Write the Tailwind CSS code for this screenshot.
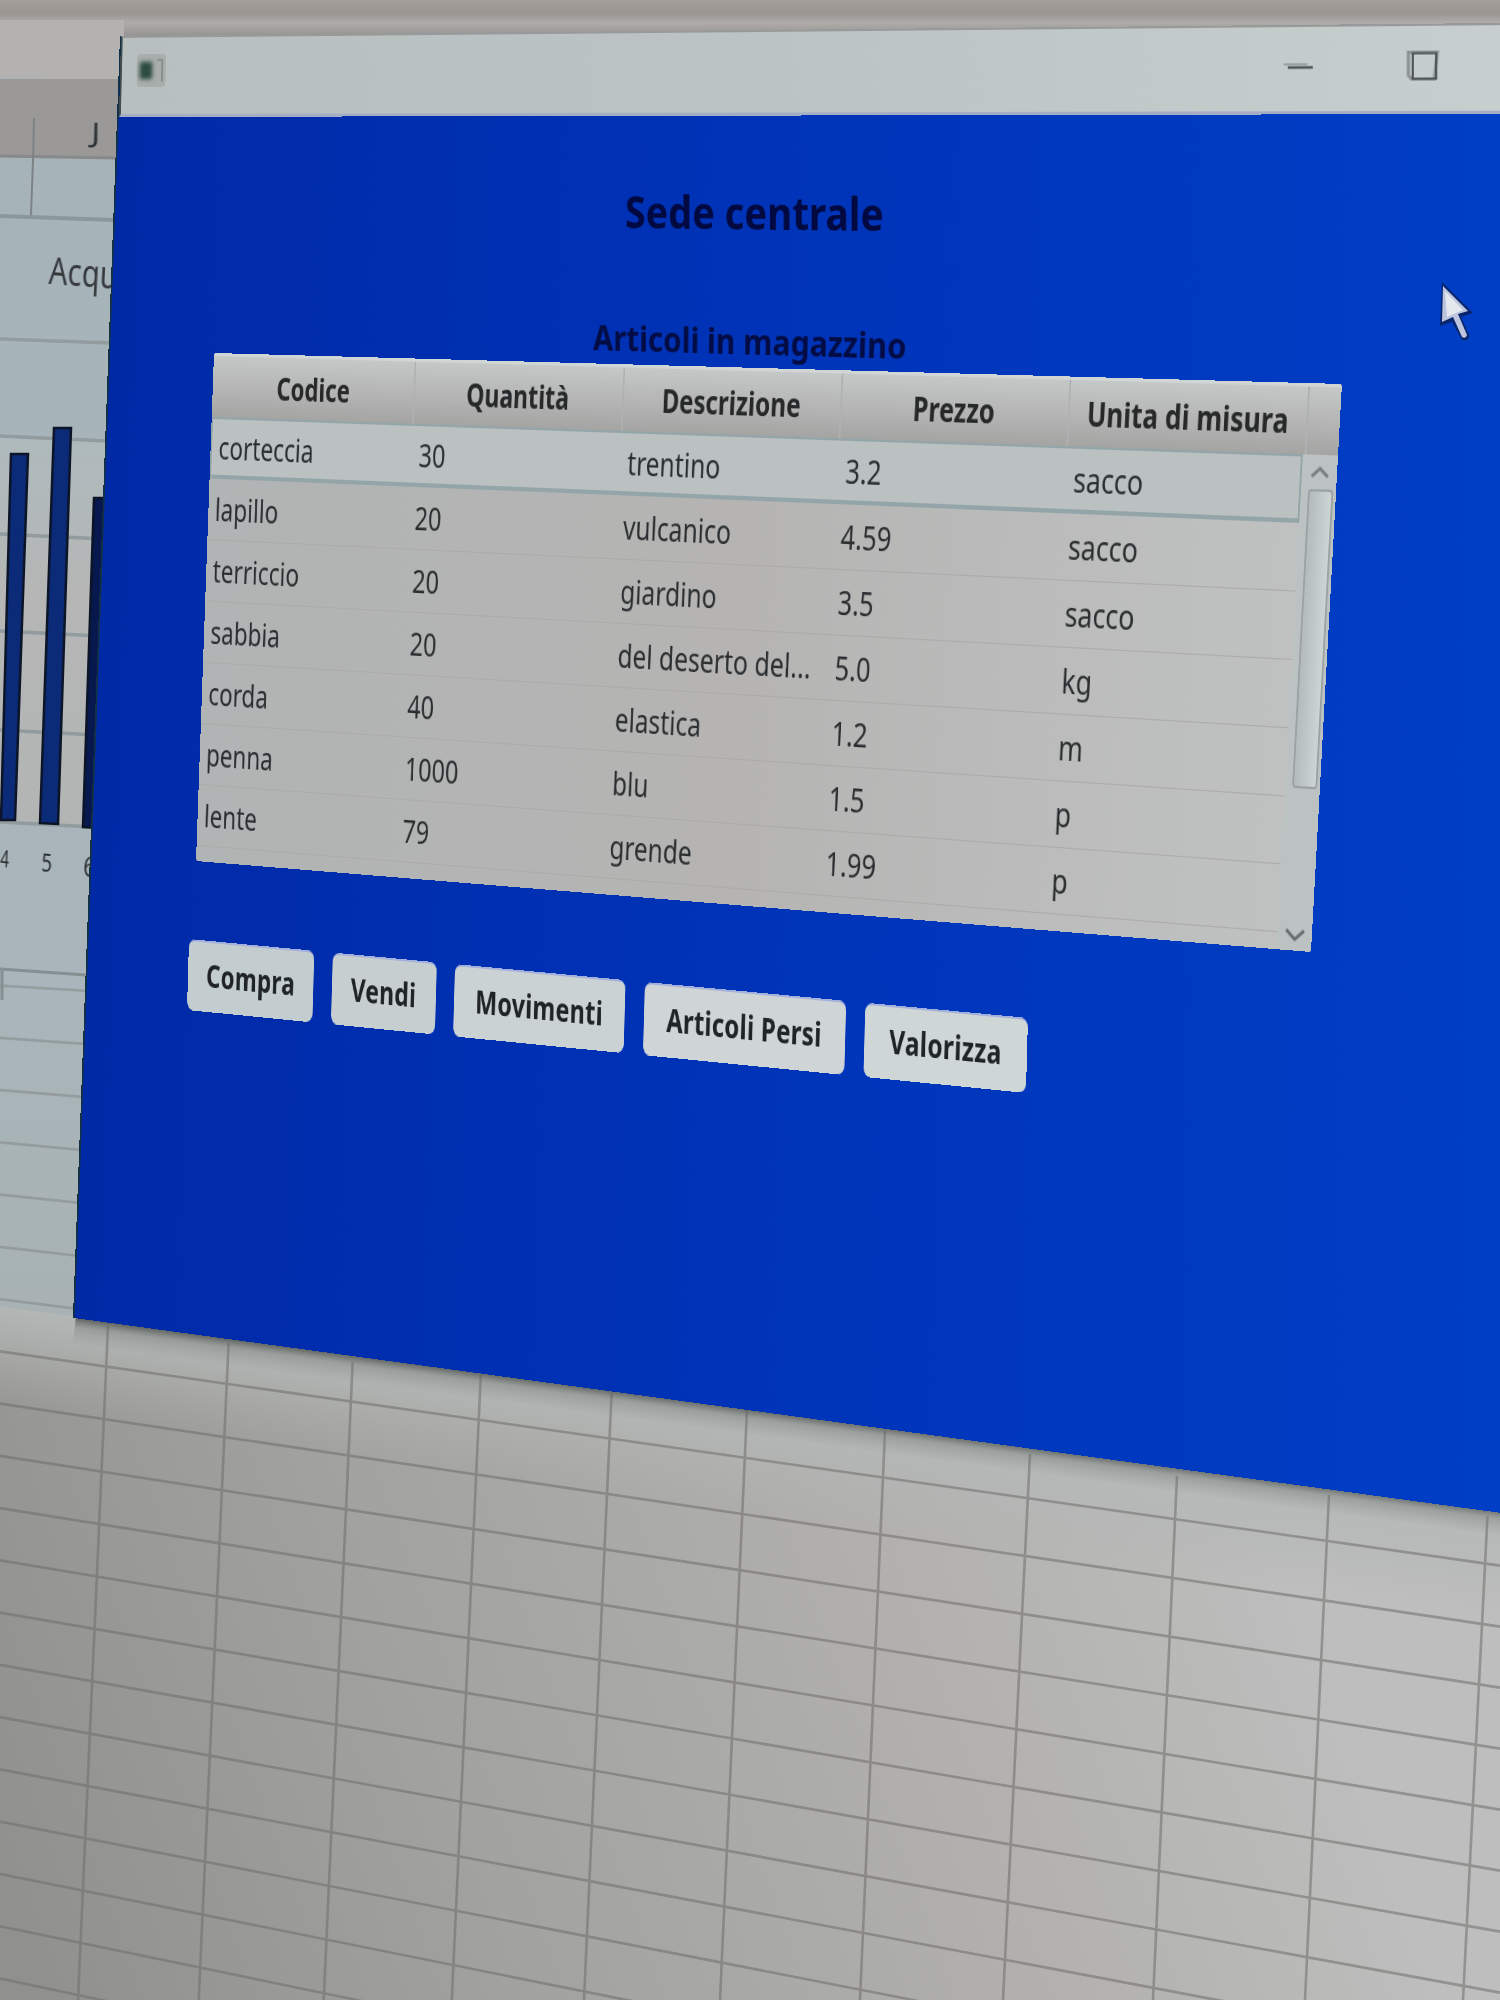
<!DOCTYPE html>
<html lang="it">
<head>
<meta charset="utf-8">
<title>Sede centrale</title>
<script src="https://cdn.jsdelivr.net/npm/@tailwindcss/browser@4"></script>
</head>
<body class="bg-[#a9a8a5]">
<main class="relative w-[1500px] h-[2000px] overflow-hidden font-['Noto_Sans','Open_Sans',sans-serif] text-[#2b2e30]">

  <!-- spreadsheet behind the window -->
  <svg class="block" width="1500" height="2000" viewBox="0 0 1500 2000">
    <defs>
      <linearGradient id="sheet" gradientUnits="userSpaceOnUse" x1="0" y1="1900" x2="1250" y2="1450">
        <stop offset="0" stop-color="#90908c"/><stop offset=".35" stop-color="#a2a29e"/><stop offset=".75" stop-color="#b3b2b0"/><stop offset="1" stop-color="#bdbebd"/>
      </linearGradient>
      <linearGradient id="cool" x1="0" y1="0" x2="0" y2="1">
        <stop offset="0" stop-color="#a5b3b9"/><stop offset=".75" stop-color="#a9b5ba"/><stop offset="1" stop-color="#a8b2b4"/>
      </linearGradient>
      <linearGradient id="fade" gradientUnits="userSpaceOnUse" x1="700" y1="1402" x2="686" y2="1502">
        <stop offset="0" stop-color="#b4bab9" stop-opacity=".95"/><stop offset=".35" stop-color="#b4b8b7" stop-opacity=".65"/><stop offset="1" stop-color="#b2b5b3" stop-opacity="0"/>
      </linearGradient>
      <linearGradient id="plot" x1="0" y1="0" x2="0" y2="1">
        <stop offset="0" stop-color="#aebabd"/><stop offset=".4" stop-color="#b5b6b5"/><stop offset="1" stop-color="#b3b5b5"/>
      </linearGradient>
      <linearGradient id="shadow" gradientUnits="userSpaceOnUse" x1="700" y1="1402" x2="696.500" y2="1428">
        <stop offset="0" stop-color="#4d524f" stop-opacity=".85"/><stop offset=".35" stop-color="#6d716f" stop-opacity=".35"/><stop offset="1" stop-color="#7d8180" stop-opacity="0"/>
      </linearGradient>
      <linearGradient id="topbar" x1="0" y1="0" x2="0" y2="1">
        <stop offset="0" stop-color="#a59f9b"/><stop offset=".35" stop-color="#9b9693"/><stop offset=".6" stop-color="#aeaba9"/><stop offset="1" stop-color="#92908f"/>
      </linearGradient>
    </defs>
    <rect width="1500" height="2000" fill="url(#sheet)"/>
    <polygon points="0,0 130,0 130,1324 0,1306" fill="url(#cool)"/>
    <polygon points="0,1306 1500,1511 1500,1614 0,1406" fill="url(#fade)"/>
    <g id="grid" stroke="#6f6e6b" stroke-width="2.6" opacity=".55"></g>
    <polygon points="76,1316 1500,1511 1500,1538 73,1344" fill="url(#shadow)"/>
    <!-- ribbon and column headings -->
    <polygon points="0,0 1500,0 1500,24 121,38 0,26" fill="url(#topbar)"/>
    <polygon points="0,20 124,20 124,80 0,78" fill="#b3b2b0"/>
    <polygon points="0,79 124,79 118,158 0,155" fill="#9a9998"/>
    <path d="M0 156L117 158" stroke="#88898a" stroke-width="3"/>
    <path d="M34 118L33 160L31 215" stroke="#7d8385" stroke-width="2" fill="none"/>
    <path d="M0 216L115 220" stroke="#8a979c" stroke-width="4"/>
    <!-- chart -->
    <polygon points="0,435 107,440 93,825 0,822" fill="url(#plot)"/>
    <path d="M0 339L112 343M0 436L107 441M0 534L105 539M0 631L100 636M0 730L97 735M0 822L94 827" stroke="#929b9e" stroke-width="3.500"/>
    <path d="M0 969L86 975M2 970V1000" stroke="#858f92" stroke-width="3"/>
    <g fill="#0b2a78" stroke="#0c1428" stroke-width="2.5">
      <polygon points="11,454 28,454 15,820 1,820"/>
      <polygon points="54,428 71,428 58,824 40,823"/>
      <polygon points="94,498 112,498 98,828 83,827" fill="#06184e"/>
    </g>
  </svg>

  <!-- chart and column texts -->
  <span class="absolute left-0 top-0 origin-top-left leading-none whitespace-nowrap text-[26px] text-[#2b3033]" data-quad="92,118 100,118 100,145 91,145">J</span>
  <span class="absolute left-0 top-0 origin-top-left leading-none whitespace-nowrap text-[32px] text-[#35393c]" data-quad="50,251 127,257 125,295 48,289">Acqui</span>
  <span class="absolute left-0 top-0 origin-top-left leading-none whitespace-nowrap text-[22px]" data-quad="1,845 10,846 9,870 0,869">4</span>
  <span class="absolute left-0 top-0 origin-top-left leading-none whitespace-nowrap text-[22px]" data-quad="42,848 53,849 52,875 41,874">5</span>
  <span class="absolute left-0 top-0 origin-top-left leading-none whitespace-nowrap text-[22px]" data-quad="84,852 96,853 95,880 83,879">6</span>

  <!-- window -->
  <section class="absolute left-0 top-0 origin-top-left w-[1430px] h-[1350px] flex flex-col border-l-2 border-[#123046]" data-quad="120,36 1500,24 1500,1513 73,1318">
    <div class="flex-1 bg-linear-to-r from-[#0029a6] via-[#0033b8] to-[#003ec6]"></div>
  </section>
  <header class="absolute left-0 top-0 origin-top-left w-[1380px] h-[84px] flex items-center justify-between pl-[17px] pr-[54px] bg-linear-to-r from-[#b8bfbf] via-[#bbc3c4] to-[#c6cece] border-t-2 border-t-[#989a99] border-b-3 border-b-[#a3adc4] border-l-2 border-l-[#404b4d]" data-quad="121,36 1500,23 1500,114 119,117">
    <div class="flex items-center w-[32px] h-[34px] bg-[#a9aeac] rounded-sm -mt-[12px]">
      <div class="w-[14px] h-[18px] ml-[3px] bg-[#2d4c40] rounded-xs blur-[2px]"></div>
      <div class="w-[7px] h-[24px] ml-[5px] border-r-2 border-t-2 border-[#858b89] rounded-xs"></div>
    </div>
    <div class="flex items-center gap-[84px] -mt-[6px]">
      <svg width="28" height="8" viewBox="0 0 28 8"><path d="M0 2H22" stroke="#8d9394" stroke-width="1.500"/><path d="M4 5H27" stroke="#4f5557" stroke-width="2.500"/></svg>
      <svg width="30" height="30" viewBox="0 0 30 30"><path d="M2 2.500H28L25.500 27.500H5L2 24Z" fill="none" stroke="#8d9394" stroke-width="3"/><path d="M6 3.500H27V27H6Z" fill="none" stroke="#4f5658" stroke-width="2"/></svg>
    </div>
  </header>

  <h1 class="absolute left-0 top-0 origin-top-left leading-none whitespace-nowrap font-bold text-[46px] text-[#020840]" data-quad="625,189 884,191 884,236 625,233">Sede centrale</h1>
  <h2 class="absolute left-0 top-0 origin-top-left leading-none whitespace-nowrap font-bold text-[36px] text-[#040c46]" data-quad="593,320 907,328 906,364 593,355">Articoli in magazzino</h2>

  <!-- stock table -->
  <section class="absolute left-0 top-0 origin-top-left w-[1393px] h-[497px] flex flex-col rounded-[3px] overflow-hidden bg-linear-to-r from-[#b1b4b4] via-[#b5b4b3] to-[#c0c2c2] text-[31px] leading-none" data-quad="214,353 1342,384 1311,952 196,861">
    <div class="h-[62px] shrink-0 flex items-stretch border-t-3 border-t-[#d0d5d5] pl-[3px] bg-linear-to-b from-[#c4c8c7] via-[#b5b6b5] to-[#a4a4a3] font-bold text-[#26282a] text-[30px]" id="head"></div>
    <div class="flex flex-1 min-h-0">
      <div class="w-[1354px] flex flex-col" id="rows"></div>
      <div class="flex-1 flex flex-col items-center bg-[#bcc2c2]">
        <svg class="my-[9px]" width="22" height="12" viewBox="0 0 22 12"><path d="M2 10L11 3L20 10" fill="none" stroke="#7b8183" stroke-width="3"/></svg>
        <div class="w-[28px] h-[262px] ml-[4px] rounded-[4px] border-2 border-[#9aa2a3] bg-linear-to-r from-[#b3bbbb] to-[#ccd4d4]"></div>
        <svg class="mt-auto mb-[8px]" width="24" height="12" viewBox="0 0 24 12"><path d="M2 2L12 10L22 2" fill="none" stroke="#6b7173" stroke-width="3"/></svg>
      </div>
    </div>
  </section>

  <!-- actions -->
  <nav class="absolute left-0 top-0 origin-top-left w-[1176px] h-[72px] flex items-stretch justify-between font-bold text-[33px] tracking-[0.01em] leading-none text-[#202427]" data-quad="189,939 1028,1018 1026,1093 187,1010">
    <button class="w-[184px] rounded-[9px] bg-[#c3cdcf] border-t-2 border-[#a4b0dc] pb-[6px] whitespace-nowrap">Compra</button>
    <button class="w-[150px] rounded-[9px] bg-[#c6cecf] border-t-2 border-[#a4b0dc] pb-[6px] whitespace-nowrap">Vendi</button>
    <button class="w-[241px] rounded-[9px] bg-[#cad2d4] border-t-2 border-[#a4b0dc] pb-[6px] whitespace-nowrap">Movimenti</button>
    <button class="w-[277px] rounded-[9px] bg-[#cfd4d6] border-t-2 border-[#a4b0dc] pb-[6px] whitespace-nowrap">Articoli Persi</button>
    <button class="w-[218px] rounded-[9px] bg-[#ced6d6] border-t-2 border-[#a4b0dc] pb-[6px] whitespace-nowrap">Valorizza</button>
  </nav>

  <!-- pointer -->
  <svg class="absolute left-[1436px] top-[280px]" width="40" height="64" viewBox="0 0 40 64">
    <path d="M6 2L37 33L25 37L33 55Q33 62 26 60L16 42L4 46Z" fill="#07266e"/>
    <path d="M7 6L32 31L22 34L31 55Q30 59 26 57L17 37L6 42Z" fill="#bcc4de"/>
    <path d="M9 11L27 30L11 37Z" fill="#e3e8ec"/>
  </svg>
</main>

<script>
const columns = ['Codice', 'Quantità', 'Descrizione', 'Prezzo', 'Unita di misura'];
const items = [
  ['corteccia', '30', 'trentino', '3.2', 'sacco'],
  ['lapillo', '20', 'vulcanico', '4.59', 'sacco'],
  ['terriccio', '20', 'giardino', '3.5', 'sacco'],
  ['sabbia', '20', 'del deserto del...', '5.0', 'kg'],
  ['corda', '40', 'elastica', '1.2', 'm'],
  ['penna', '1000', 'blu', '1.5', 'p'],
  ['lente', '79', 'grende', '1.99', 'p']
];
document.getElementById('head').innerHTML = columns.map(c =>
  `<div class="w-[271px] shrink-0 flex items-center justify-center border-r-2 border-[#afb2b1] whitespace-nowrap">${c}</div>`).join('');
document.getElementById('rows').innerHTML = items.map((r, i) =>
  `<div class="h-[60px] shrink-0 flex ${i ? 'border-b border-[#acabaa]' : 'border-2 border-b-4 border-[#93a5a8] bg-[#bbc1c1]'}">` +
  r.map(t => `<div class="w-[271px] shrink-0 flex items-center pl-[9px] whitespace-nowrap">${t}</div>`).join('') + '</div>').join('');

// sheet grid lines
let lines = '';
for (let k = -7; k < 13; k++) {
  const y0 = 1351.4 + 52.25 * k, y1 = 1565.6 + 61 * k;
  lines += k < 0
    ? `<line x1="0" y1="${y0}" x2="110" y2="${y0 + 15 + k * 1.2}" opacity=".6"/>`
    : `<line x1="0" y1="${y0}" x2="1500" y2="${y1}"/>`;
}
[[108,1326,78],[228.6,1343,198.7],[352.7,1362,323.7],[480.8,1375,451.8],[611.6,1393,584],[747,1410,720],
 [885,1431,860],[1030,1454,1003],[1177,1476,1153],[1329,1495,1305],[1487.5,1516,1463]]
  .forEach(([x, y, x2]) => lines += `<line x1="${x}" y1="${y}" x2="${x2}" y2="2000"/>`);
document.getElementById('grid').innerHTML = lines;

// maps a flat element onto its four corners: top left, top right, bottom right, bottom left
function project(el) {
  const [[x0, y0], [x1, y1], [x2, y2], [x3, y3]] = el.dataset.quad.split(' ').map(p => p.split(',').map(Number));
  const w = el.offsetWidth, t = el.offsetHeight;
  if (!w || !t) return;
  const dx1 = x1 - x2, dx2 = x3 - x2, sx = x0 - x1 + x2 - x3;
  const dy1 = y1 - y2, dy2 = y3 - y2, sy = y0 - y1 + y2 - y3;
  const den = dx1 * dy2 - dx2 * dy1;
  const g = (sx * dy2 - dx2 * sy) / den, h = (dx1 * sy - sx * dy1) / den;
  const a = x1 - x0 + g * x1, b = x3 - x0 + h * x3, d = y1 - y0 + g * y1, e = y3 - y0 + h * y3;
  el.style.transform = `matrix3d(${[a / w, d / w, 0, g / w, b / t, e / t, 0, h / t, 0, 0, 1, 0, x0, y0, 0, 1].map(v => v.toFixed(10)).join(',')})`;
}
const surfaces = [...document.querySelectorAll('[data-quad]')];
const observer = new ResizeObserver(() => surfaces.forEach(project));
surfaces.forEach(el => { project(el); observer.observe(el); });
addEventListener('load', () => surfaces.forEach(project));
</script>
</body>
</html>
